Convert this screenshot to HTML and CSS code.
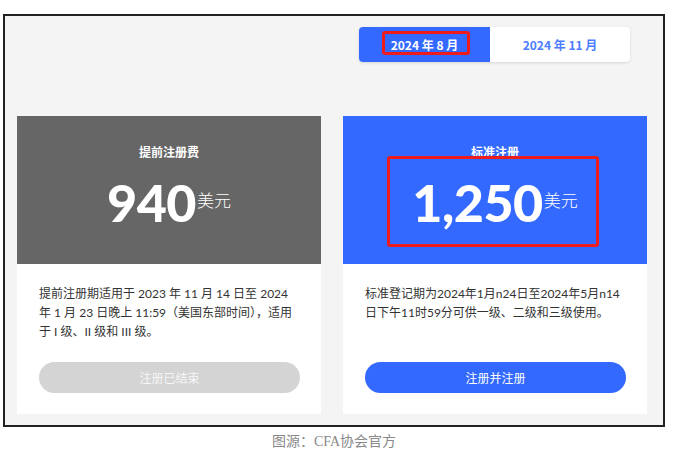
FILE: index.html
```html
<!DOCTYPE html>
<html lang="zh-CN">
<head>
<meta charset="utf-8">
<title>CFA 注册费</title>
<link rel="stylesheet" href="styles.css">
</head>
<body>
<div class="frame">
  <div class="tabs-row">
    <div class="tabs">
      <div class="tab tab-active">2024 年 8 月<span class="mark mark-tab"></span></div>
      <div class="tab">2024 年 11 月</div>
    </div>
  </div>
  <div class="cards">
    <div class="card">
      <div class="card-head head-gray">
        <div class="card-title">提前注册费</div>
        <div class="price"><span class="amount">940</span><span class="unit">美元</span></div>
      </div>
      <div class="card-body">
        <p class="desc">提前注册期适用于 2023 年 11 月 14 日至 2024<br>年 1 月 23 日晚上 11:59（美国东部时间），适用<br>于 I 级、II 级和 III 级。</p>
        <div class="btn btn-disabled">注册已结束</div>
      </div>
    </div>
    <div class="card">
      <div class="card-head head-blue">
        <div class="card-title">标准注册</div>
        <div class="price"><span class="amount">1,250</span><span class="unit">美元</span></div>
        <span class="mark mark-price"></span>
      </div>
      <div class="card-body">
        <p class="desc">标准登记期为2024年1月n24日至2024年5月n14<br>日下午11时59分可供一级、二级和三级使用。</p>
        <div class="btn btn-primary">注册并注册</div>
      </div>
    </div>
  </div>
</div>
<div class="caption">图源：CFA协会官方</div>
</body>
</html>
```

FILE: styles.css
```css
html, body {
  margin: 0;
  padding: 0;
  background: #ffffff;
}

body {
  font-family: "Lato", "Noto Sans CJK SC", sans-serif;
  color: #333333;
}

.frame {
  box-sizing: border-box;
  width: 662px;
  height: 413px;
  margin: 14px 0 0 3px;
  border: 2px solid #222222;
  background: #f4f4f4;
  padding: 11px 16px 11px 12px;
}

.tabs-row {
  display: flex;
  justify-content: flex-end;
  padding-right: 17px;
}

.tabs {
  display: flex;
  height: 35px;
  border-radius: 4px;
  overflow: visible;
  box-shadow: 0 1px 3px rgba(0, 0, 0, 0.12);
  background: #ffffff;
}

.tab {
  position: relative;
  display: flex;
  align-items: center;
  justify-content: center;
  width: 140px;
  font-family: "Noto Sans CJK SC", sans-serif;
  font-weight: 700;
  font-size: 12px;
  color: #4d7cff;
  border-radius: 0 4px 4px 0;
}

.tab-active {
  width: 131px;
  background: #3369ff;
  color: #ffffff;
  border-radius: 4px 0 0 4px;
}

.mark {
  position: absolute;
  box-sizing: border-box;
  border: 3px solid #ee1c1c;
  border-radius: 3px;
}

.mark-tab {
  left: 23px;
  top: 4px;
  width: 88px;
  height: 24px;
}

.cards {
  display: grid;
  grid-template-columns: 304px 304px;
  column-gap: 22px;
  margin-top: 54px;
}

.card {
  background: #ffffff;
}

.card-head {
  position: relative;
  box-sizing: border-box;
  height: 148px;
  padding-top: 29px;
  display: flex;
  flex-direction: column;
  align-items: center;
  color: #ffffff;
}

.head-gray {
  background: #666666;
}

.head-blue {
  background: #3369ff;
}

.card-title {
  font-family: "Noto Sans CJK SC", sans-serif;
  font-weight: 700;
  font-size: 12px;
  line-height: 14px;
}

.price {
  margin-top: 12px;
  display: flex;
  align-items: baseline;
}

.amount {
  font-family: "Lato", sans-serif;
  font-weight: 900;
  font-size: 52px;
  line-height: 62px;
  letter-spacing: -0.5px;
}

.unit {
  font-family: "Noto Sans CJK SC", sans-serif;
  font-weight: 300;
  font-size: 17px;
  line-height: 20px;
  margin-left: 1px;
  transform: translateY(-15px);
}

.mark-price {
  left: 44px;
  top: 40px;
  width: 212px;
  height: 91px;
}

.card-body {
  box-sizing: border-box;
  height: 150px;
  padding: 20px 21px 21px 22px;
  display: flex;
  flex-direction: column;
}

.desc {
  margin: 0;
  font-size: 12px;
  line-height: 19px;
  white-space: nowrap;
  color: #333333;
}

.btn {
  margin-top: auto;
  height: 31px;
  border-radius: 16px;
  display: flex;
  align-items: center;
  justify-content: center;
  font-family: "Noto Sans CJK SC", sans-serif;
  font-size: 12px;
  color: #ffffff;
}

.btn-disabled {
  background: #d4d4d4;
  color: #f6f6f6;
}

.btn-primary {
  background: #3369ff;
}

.caption {
  width: 668px;
  text-align: center;
  margin-top: 6px;
  font-family: "Liberation Serif", "Noto Sans CJK SC", serif;
  font-size: 14px;
  line-height: 18px;
  color: #888888;
}
```
